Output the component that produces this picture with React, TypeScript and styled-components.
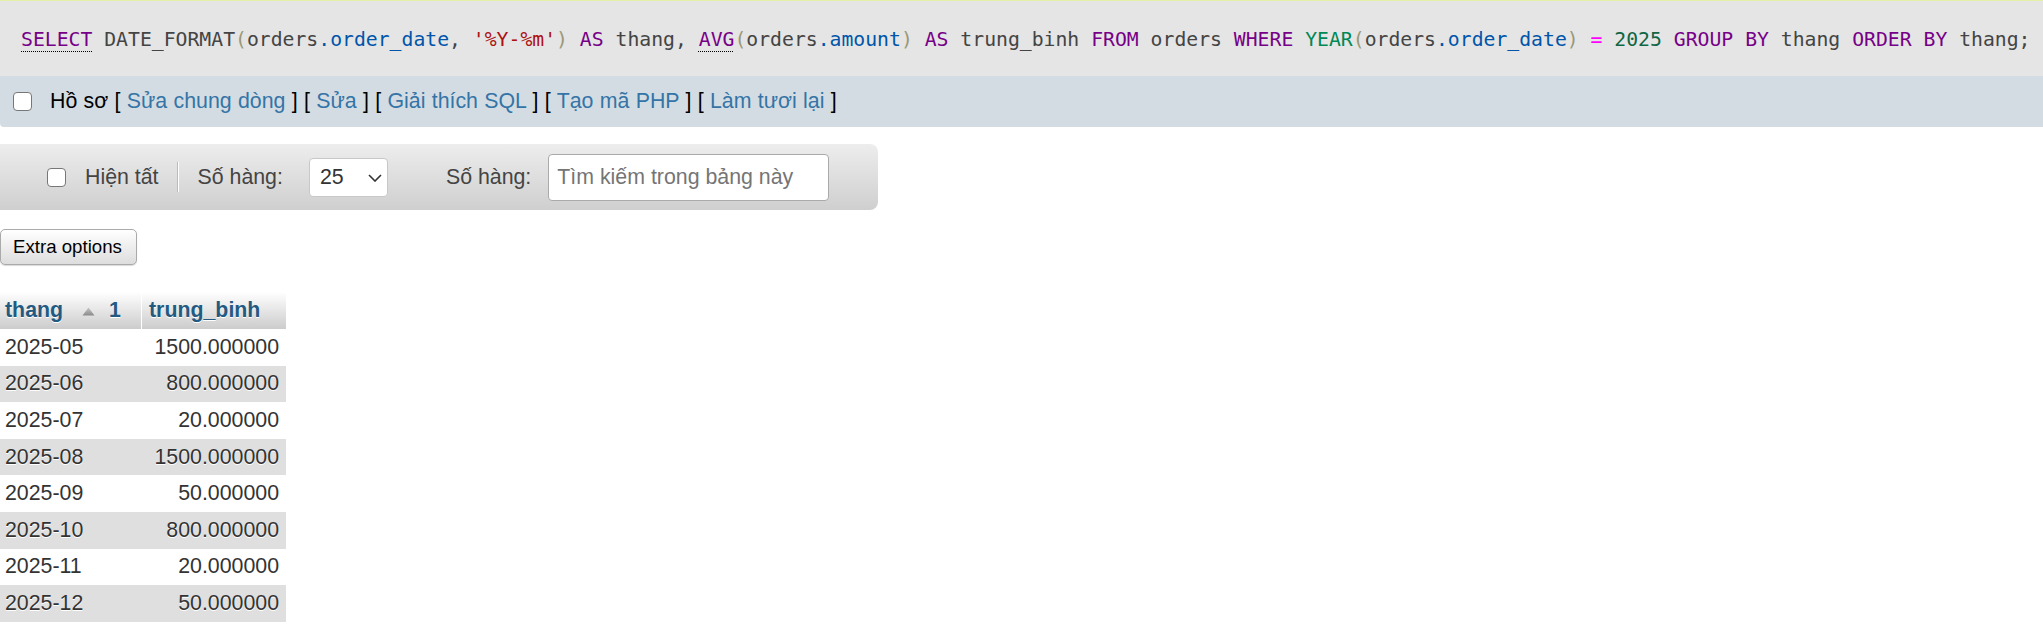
import styled, { createGlobalStyle } from 'styled-components';

const GlobalStyle = createGlobalStyle`
  body {
    margin: 0;
    background: #fff;
    font-family: "Liberation Sans", Arial, sans-serif;
    font-size: 21.33px;
    color: #444;
  }
`;

type TokenKind = 'kw' | 'plain' | 'br' | 'var' | 'str' | 'op' | 'num' | 'type';

const tokenColors: Record<TokenKind, string> = {
  kw: '#770088',
  plain: '#444444',
  br: '#999977',
  var: '#0055aa',
  str: '#aa1111',
  op: '#ff00ff',
  num: '#116644',
  type: '#008855',
};

// câu truy vấn, tách theo màu như CodeMirror
const sqlTokens: [string, TokenKind, boolean?][] = [
  ['SELECT', 'kw', true], [' DATE_FORMAT', 'plain'], ['(', 'br'], ['orders', 'plain'],
  ['.order_date', 'var'], [', ', 'plain'], ["'%Y-%m'", 'str'], [')', 'br'], [' ', 'plain'],
  ['AS', 'kw'], [' thang, ', 'plain'], ['AVG', 'kw', true], ['(', 'br'], ['orders', 'plain'],
  ['.amount', 'var'], [')', 'br'], [' ', 'plain'], ['AS', 'kw'], [' trung_binh ', 'plain'],
  ['FROM', 'kw'], [' orders ', 'plain'], ['WHERE', 'kw'], [' ', 'plain'], ['YEAR', 'type'],
  ['(', 'br'], ['orders', 'plain'], ['.order_date', 'var'], [')', 'br'], [' ', 'plain'],
  ['=', 'op'], [' ', 'plain'], ['2025', 'num'], [' ', 'plain'], ['GROUP', 'kw'], [' ', 'plain'],
  ['BY', 'kw'], [' thang ', 'plain'], ['ORDER', 'kw'], [' ', 'plain'], ['BY', 'kw'], [' thang;', 'plain'],
];

const actionLinks = ['Sửa chung dòng', 'Sửa', 'Giải thích SQL', 'Tạo mã PHP', 'Làm tươi lại'];

const rows = [
  ['2025-05', '1500.000000'],
  ['2025-06', '800.000000'],
  ['2025-07', '20.000000'],
  ['2025-08', '1500.000000'],
  ['2025-09', '50.000000'],
  ['2025-10', '800.000000'],
  ['2025-11', '20.000000'],
  ['2025-12', '50.000000'],
];

const App = () => {
  return (
    <>
      <GlobalStyle />
      <TopLine />
      <SqlBox>
        <SqlCode>
          {sqlTokens.map(([text, kind, linked], i) => (
            <Token key={i} $kind={kind} $linked={!!linked}>{text}</Token>
          ))}
        </SqlCode>
      </SqlBox>

      <ActionBar>
        <CheckBox type="checkbox" />
        <ActionText>
          Hồ sơ
          {actionLinks.map((label) => (
            <span key={label}>
              {' [ '}
              <ActionLink href="#">{label}</ActionLink>
              {' ]'}
            </span>
          ))}
        </ActionText>
      </ActionBar>

      <Toolbar>
        <CheckBox type="checkbox" $ml={47} />
        <ToolLabel $ml={19}>Hiện tất</ToolLabel>
        <Separator />
        <ToolLabel $ml={20}>Số hàng:</ToolLabel>
        <SelectWrap>
          <RowSelect defaultValue="25">
            <option value="25">25</option>
            <option value="50">50</option>
            <option value="100">100</option>
          </RowSelect>
          <Chevron width="14" height="8" viewBox="0 0 14 8">
            <path d="M1 1 L7 7 L13 1" fill="none" stroke="#333" strokeWidth="1.6" />
          </Chevron>
        </SelectWrap>
        <ToolLabel $ml={58}>Số hàng:</ToolLabel>
        <SearchInput placeholder="Tìm kiếm trong bảng này" />
      </Toolbar>

      <ExtraButton>Extra options</ExtraButton>

      <ResultTable>
        <thead>
          <tr>
            <HeadCell $width={141}>
              <HeadInner>
                thang
                <SortArrow width="13" height="9" viewBox="0 0 13 9">
                  <defs>
                    <linearGradient id="arrowGrad" x1="0" y1="0" x2="0" y2="1">
                      <stop offset="0" stopColor="#c8c8c8" />
                      <stop offset="1" stopColor="#8a8a8a" />
                    </linearGradient>
                  </defs>
                  <path d="M6.5 0.5 L12.5 8.5 L0.5 8.5 Z" fill="url(#arrowGrad)" />
                </SortArrow>
                <SortIndex>1</SortIndex>
              </HeadInner>
            </HeadCell>
            <HeadCell $width={145} $divider>trung_binh</HeadCell>
          </tr>
        </thead>
        <tbody>
          {rows.map(([month, avg], i) => (
            <DataRow key={month} $odd={i % 2 === 1}>
              <DataCell>{month}</DataCell>
              <DataCell $right>{avg}</DataCell>
            </DataRow>
          ))}
        </tbody>
      </ResultTable>
    </>
  );
};

const TopLine = styled.div`
  height: 1px;
  background: #e6efa6;
`;

const SqlBox = styled.div`
  background: #e5e5e5;
  height: 75px;
  display: flex;
  align-items: center;
  padding-left: 21px;
`;

const SqlCode = styled.code`
  font-family: "DejaVu Sans Mono", "Liberation Mono", monospace;
  font-size: 19.75px;
  white-space: pre;
  color: #444;
  padding-top: 2px;
`;

const Token = styled.span<{ $kind: TokenKind; $linked: boolean }>`
  color: ${(p) => tokenColors[p.$kind]};
  text-decoration: ${(p) => (p.$linked ? 'underline dotted #000' : 'none')};
  text-decoration-thickness: 1px;
  text-underline-offset: 5px;
`;

const ActionBar = styled.div`
  background: #d3dce3;
  height: 51px;
  display: flex;
  align-items: center;
  padding-left: 13px;
  gap: 18px;
  border-bottom-left-radius: 4px;
`;

const CheckBox = styled.input<{ $ml?: number }>`
  appearance: none;
  margin: 0 0 0 ${(p) => p.$ml ?? 0}px;
  width: 19px;
  height: 19px;
  border: 1.5px solid #777;
  border-radius: 4px;
  background: #fff;
  box-sizing: border-box;
  flex-shrink: 0;
`;

const ActionText = styled.div`
  color: #000;
  white-space: pre;
  word-spacing: 0.4px;
`;

const ActionLink = styled.a`
  color: #3574a6;
  text-decoration: none;
`;

const Toolbar = styled.div`
  margin-top: 17px;
  width: 878px;
  height: 66px;
  box-sizing: border-box;
  border-radius: 0 8px 8px 0;
  background: linear-gradient(#ededed, #cfcfcf);
  display: flex;
  align-items: center;
`;

const ToolLabel = styled.span<{ $ml: number }>`
  margin-left: ${(p) => p.$ml}px;
  color: #444;
  white-space: nowrap;
`;

const Separator = styled.span`
  margin-left: 18px;
  width: 1px;
  height: 30px;
  background: #b4bcc4;
  box-shadow: 1px 0 0 #fff;
`;

const SelectWrap = styled.div`
  position: relative;
  margin-left: 26px;
  width: 79px;
  height: 39px;
`;

const RowSelect = styled.select`
  appearance: none;
  width: 100%;
  height: 100%;
  box-sizing: border-box;
  border: 1px solid #c8c8c8;
  border-radius: 4px;
  background: #fff;
  padding: 0 0 0 10px;
  font-family: inherit;
  font-size: 21.33px;
  color: #333;
  outline: none;
`;

const Chevron = styled.svg`
  position: absolute;
  left: 59px;
  top: 16px;
  pointer-events: none;
`;

const SearchInput = styled.input`
  margin-left: 17px;
  width: 281px;
  height: 47px;
  box-sizing: border-box;
  border: 1px solid #aaa;
  border-radius: 4px;
  padding: 0 8px;
  font-family: inherit;
  font-size: 21.33px;
  color: #333;
  background: #fff;

  &::placeholder {
    color: #757575;
  }
`;

const ExtraButton = styled.button`
  display: block;
  margin-top: 19px;
  height: 36px;
  padding: 0 14px 0 12px;
  border: 1px solid #aaa;
  border-radius: 5px;
  background: linear-gradient(#ffffff, #dddddd);
  box-shadow: 0 1px 1px rgba(0, 0, 0, 0.15);
  font-family: "Liberation Sans", Arial, sans-serif;
  font-size: 18.67px;
  color: #000;
`;

const ResultTable = styled.table`
  margin-top: 27px;
  border-collapse: separate;
  border-spacing: 0;
  font-size: 21.33px;
`;

const HeadCell = styled.th<{ $width: number; $divider?: boolean }>`
  width: ${(p) => p.$width}px;
  height: 37px;
  box-sizing: border-box;
  padding: 0 5px 0 ${(p) => (p.$divider ? 7 : 5)}px;
  text-align: left;
  font-weight: bold;
  color: #235a81;
  text-shadow: 0 1px 0 #fff;
  background: linear-gradient(#ffffff, #cccccc);
  border-left: ${(p) => (p.$divider ? '1px solid #fff' : 'none')};
  white-space: nowrap;
`;

const HeadInner = styled.div`
  display: flex;
  align-items: center;
`;

const SortArrow = styled.svg`
  margin-left: 19px;
  margin-top: 1px;
`;

const SortIndex = styled.span`
  margin-left: 14px;
`;

const DataRow = styled.tr<{ $odd: boolean }>`
  background: ${(p) => (p.$odd ? '#dfdfdf' : '#fff')};
`;

const DataCell = styled.td<{ $right?: boolean }>`
  height: 36.6px;
  box-sizing: border-box;
  padding: 0 ${(p) => (p.$right ? 7 : 5)}px 0 5px;
  text-align: ${(p) => (p.$right ? 'right' : 'left')};
  color: #333;
  text-shadow: 0 1px 0 #fff;
  white-space: nowrap;
`;

export default App;
